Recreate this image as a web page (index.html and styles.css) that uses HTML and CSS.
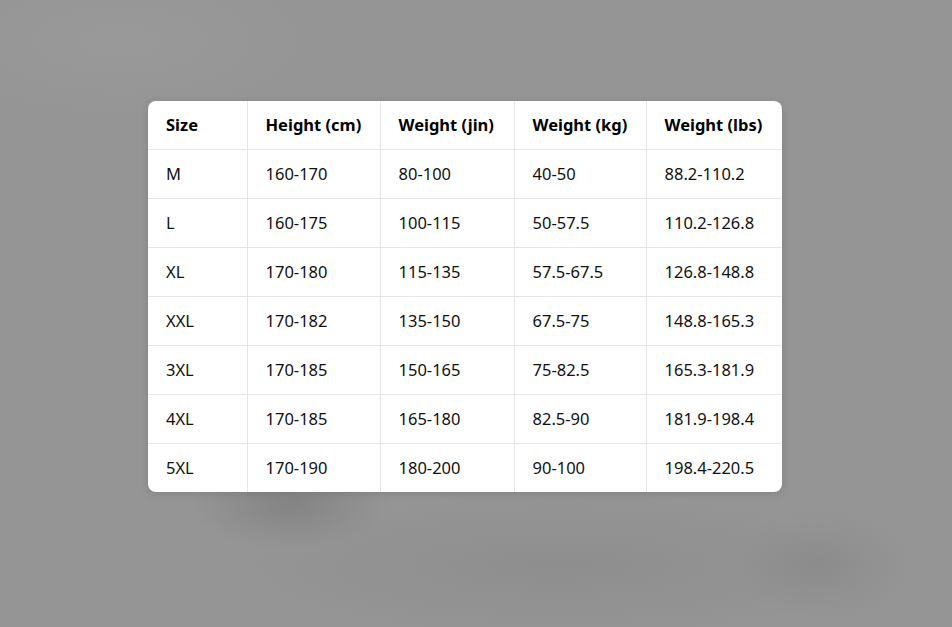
FILE: index.html
```html
<!DOCTYPE html>
<html>
<head>
<meta charset="utf-8">
<link rel="stylesheet" href="styles.css">
</head>
<body>
<div class="backdrop">
  <div class="card">
    <table class="size-table">
      <colgroup>
        <col class="c1"><col class="c2"><col class="c3"><col class="c4"><col class="c5">
      </colgroup>
      <thead>
        <tr><th>Size</th><th>Height (cm)</th><th>Weight (jin)</th><th>Weight (kg)</th><th>Weight (lbs)</th></tr>
      </thead>
      <tbody>
        <tr><td>M</td><td>160-170</td><td>80-100</td><td>40-50</td><td>88.2-110.2</td></tr>
        <tr><td>L</td><td>160-175</td><td>100-115</td><td>50-57.5</td><td>110.2-126.8</td></tr>
        <tr><td>XL</td><td>170-180</td><td>115-135</td><td>57.5-67.5</td><td>126.8-148.8</td></tr>
        <tr><td>XXL</td><td>170-182</td><td>135-150</td><td>67.5-75</td><td>148.8-165.3</td></tr>
        <tr><td>3XL</td><td>170-185</td><td>150-165</td><td>75-82.5</td><td>165.3-181.9</td></tr>
        <tr><td>4XL</td><td>170-185</td><td>165-180</td><td>82.5-90</td><td>181.9-198.4</td></tr>
        <tr><td>5XL</td><td>170-190</td><td>180-200</td><td>90-100</td><td>198.4-220.5</td></tr>
      </tbody>
    </table>
  </div>
</div>
</body>
</html>
```
FILE: styles.css
```css
html, body {
  margin: 0;
  padding: 0;
}
body {
  width: 952px;
  height: 627px;
  overflow: hidden;
  font-family: "Noto Sans", "Open Sans", sans-serif;
}
.backdrop {
  width: 952px;
  height: 627px;
  box-sizing: border-box;
  padding: 101px 0 0 148px;
  background:
    radial-gradient(ellipse 100px 45px at 290px 505px, rgba(115,115,115,0.5), rgba(115,115,115,0) 100%),
    radial-gradient(ellipse 320px 70px at 560px 565px, rgba(128,128,128,0.35), rgba(128,128,128,0) 100%),
    radial-gradient(ellipse 90px 55px at 820px 565px, rgba(125,125,125,0.35), rgba(125,125,125,0) 100%),
    radial-gradient(ellipse 200px 80px at 120px 40px, rgba(160,160,160,0.35), rgba(160,160,160,0) 100%),
    #959595;
}
.card {
  width: 634px;
  background: #ffffff;
  border-radius: 8px;
  overflow: hidden;
  box-shadow: 0 2px 8px rgba(0,0,0,0.12);
}
.size-table {
  width: 634px;
  border-collapse: collapse;
  table-layout: fixed;
  color: #111111;
  font-size: 16.5px;
}
.c1 { width: 99px; }
.c2 { width: 133px; }
.c3 { width: 134px; }
.c4 { width: 132px; }
.c5 { width: 136px; }
.size-table th,
.size-table td {
  height: 46px;
  padding: 0 0 2px 18px;
  text-align: left;
  white-space: nowrap;
  border-right: 1px solid #e6e6e6;
  border-bottom: 1px solid #e6e6e6;
}
.size-table tr th:last-child,
.size-table tr td:last-child {
  border-right: none;
}
.size-table tbody tr:last-child td {
  border-bottom: none;
}
.size-table th {
  font-weight: 700;
  color: #000;
}
```
